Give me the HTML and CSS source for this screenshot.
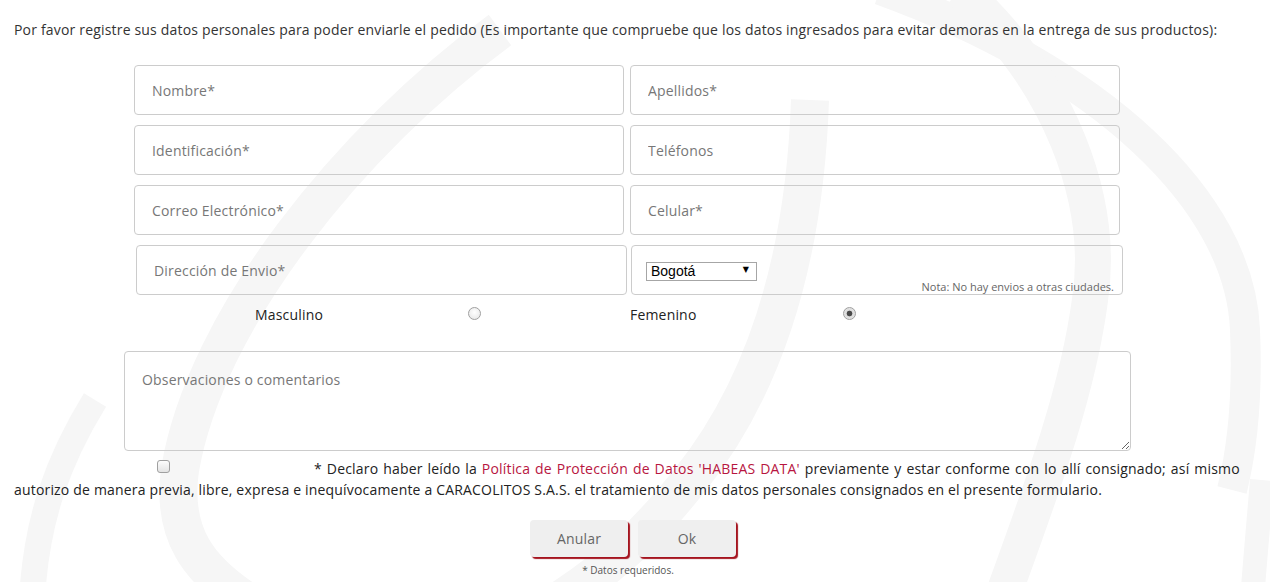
FILE: index.html
```html
<!DOCTYPE html>
<html lang="es">
<head>
<meta charset="utf-8">
<title>Registro de datos</title>
<link rel="stylesheet" href="styles.css">
</head>
<body>
<svg class="watermark" width="1270" height="582" viewBox="0 0 1270 582" aria-hidden="true">
  <g fill="none" stroke="#f6f6f6" stroke-linecap="butt">
    <path d="M 500 30 C 350 140, 205 320, 180 470 C 171 535, 200 570, 245 600" stroke-width="38"/>
    <path d="M 32 600 C 36 520, 58 460, 95 400" stroke-width="26"/>
    <path d="M 880 -10 C 1100 70, 1240 200, 1245 330 C 1248 400, 1242 450, 1232 490" stroke-width="30"/>
    <path d="M 960 -10 C 1060 80, 1105 200, 1090 300 C 1078 390, 1045 480, 1005 590" stroke-width="36"/>
    <path d="M 810 100 C 805 250, 770 380, 690 480 C 650 530, 620 560, 560 600" stroke-width="38"/>
    <path d="M 1262 480 C 1258 530, 1255 560, 1252 600" stroke-width="24"/>
  </g>
</svg>

<p class="intro">Por favor registre sus datos personales para poder enviarle el pedido (Es importante que compruebe que los datos ingresados para evitar demoras en la entrega de sus productos):</p>

<form class="form">
  <div class="grid">
    <input class="field" type="text" placeholder="Nombre*">
    <input class="field" type="text" placeholder="Apellidos*">
    <input class="field" type="text" placeholder="Identificación*">
    <input class="field" type="text" placeholder="Teléfonos">
    <input class="field" type="text" placeholder="Correo Electrónico*">
    <input class="field" type="text" placeholder="Celular*">
  </div>
  <div class="grid grid-shift">
    <input class="field" type="text" placeholder="Dirección de Envio*">
    <div class="field city">
      <span class="select-wrap">
        <select class="select">
          <option>Bogotá</option>
        </select>
        <span class="select-arrow">▼</span>
      </span>
      <span class="note">Nota: No hay envios a otras ciudades.</span>
    </div>
  </div>

  <div class="gender">
    <span class="gender-label">Masculino</span>
    <input class="radio" type="radio" name="sexo" value="m">
    <span class="gender-label">Femenino</span>
    <input class="radio" type="radio" name="sexo" value="f" checked>
  </div>

  <textarea class="comments" placeholder="Observaciones o comentarios"></textarea>
</form>

<p class="consent"><input class="check" type="checkbox"><span class="consent-first">* Declaro haber leído la <a class="link" href="#">Política de Protección de Datos 'HABEAS DATA'</a> previamente y estar conforme con lo allí consignado; así mismo</span> autorizo de manera previa, libre, expresa e inequívocamente a CARACOLITOS S.A.S. el tratamiento de mis datos personales consignados en el presente formulario.</p>

<div class="actions">
  <button class="btn" type="button">Anular</button>
  <button class="btn" type="button">Ok</button>
</div>
<p class="required">* Datos requeridos.</p>
</body>
</html>
```

FILE: styles.css
```css
html {
  margin: 0;
  padding: 0;
  background: #ffffff;
}

body {
  margin: 0;
  padding: 0;
  font-family: "Open Sans", "Noto Sans", sans-serif;
  font-size: 14px;
  letter-spacing: 0.18px;
  color: #333333;
  width: 1270px;
  height: 582px;
  overflow: hidden;
}

.watermark {
  position: absolute;
  top: 0;
  left: 0;
  z-index: -1;
}

.intro {
  margin: 0;
  padding: 20px 14px 0 14px;
  line-height: 20px;
}

.form {
  margin: 25px 0 0 134px;
  width: 986px;
}

.grid {
  display: grid;
  grid-template-columns: 490px 490px;
  column-gap: 6px;
  row-gap: 10px;
}

.grid-shift {
  margin-top: 10px;
  padding-left: 2px;
  grid-template-columns: 491px 492px;
  column-gap: 4px;
}

.field {
  box-sizing: border-box;
  height: 50px;
  border: 1px solid #cccccc;
  border-radius: 4px;
  background: transparent;
  padding: 0 17px;
  font-family: "Open Sans", "Noto Sans", sans-serif;
  font-size: 14px;
  letter-spacing: 0.18px;
  color: #555555;
  outline: none;
}

.field::placeholder {
  color: #777777;
}

.city {
  position: relative;
  padding: 15px 14px 0 14px;
}

.select-wrap {
  position: relative;
  display: inline-block;
}

.select {
  appearance: none;
  -webkit-appearance: none;
  box-sizing: border-box;
  width: 111px;
  height: 19px;
  border: 1px solid #a6a6a6;
  border-radius: 0;
  background: #ffffff;
  padding: 0 0 0 4px;
  font-family: "Liberation Sans", Arial, sans-serif;
  font-size: 14px;
  letter-spacing: 0;
  line-height: 17px;
  color: #000000;
  outline: none;
}

.select-arrow {
  position: absolute;
  right: 8px;
  top: 4px;
  font-family: "DejaVu Sans", sans-serif;
  font-size: 8px;
  line-height: 10px;
  color: #000000;
  pointer-events: none;
}

.note {
  position: absolute;
  right: 8px;
  bottom: 0;
  font-size: 11px;
  letter-spacing: 0;
  line-height: 14px;
  color: #666666;
}

.gender {
  display: grid;
  grid-template-columns: 213px 162px 213px auto;
  align-items: center;
  margin: 10px 0 0 121px;
  height: 20px;
}

.gender-label {
  line-height: 20px;
  color: #222222;
}

.radio {
  appearance: none;
  -webkit-appearance: none;
  box-sizing: border-box;
  width: 13px;
  height: 13px;
  margin: 0 0 4px 0;
  border: 1px solid #a0a0a0;
  border-radius: 50%;
  background: radial-gradient(circle at 50% 40%, #ffffff 0%, #e4e4e4 100%);
}

.radio:checked {
  background: radial-gradient(circle, #4a4a4a 0, #4a4a4a 2.5px, #dcdcdc 3.2px, #ececec 100%);
}

.comments {
  display: block;
  box-sizing: border-box;
  width: 1007px;
  height: 100px;
  margin: 26px 0 0 -10px;
  padding: 18px 17px;
  border: 1px solid #cccccc;
  border-radius: 4px;
  background: transparent;
  font-family: "Open Sans", "Noto Sans", sans-serif;
  font-size: 14px;
  letter-spacing: 0.18px;
  line-height: 20px;
  color: #555555;
  outline: none;
}

.comments::placeholder {
  color: #777777;
}

.consent {
  margin: 7px 0 0 0;
  padding: 0 14px;
  line-height: 21px;
  color: #222222;
}

.consent-first {
  word-spacing: 1.1px;
}

.check {
  appearance: none;
  -webkit-appearance: none;
  box-sizing: border-box;
  width: 13px;
  height: 13px;
  margin: 0 144px 0 143px;
  vertical-align: 1px;
  border: 1px solid #a0a0a0;
  border-radius: 3px;
  background: linear-gradient(#fdfdfd, #e3e3e3);
}

.link {
  color: #b8163f;
  text-decoration: none;
}

.actions {
  display: flex;
  justify-content: center;
  gap: 10px;
  margin-top: 20px;
  padding-right: 4px;
}

.btn {
  box-sizing: border-box;
  width: 98px;
  height: 37px;
  border: none;
  border-radius: 4px;
  background: #efefef;
  box-shadow: 2px 2px 1px #a5141f;
  font-family: "Open Sans", "Noto Sans", sans-serif;
  font-size: 14px;
  letter-spacing: 0.18px;
  color: #666666;
}

.required {
  margin: 7px 0 0 0;
  padding-right: 14px;
  text-align: center;
  font-size: 10px;
  letter-spacing: 0;
  line-height: 12px;
  color: #555555;
}
```
